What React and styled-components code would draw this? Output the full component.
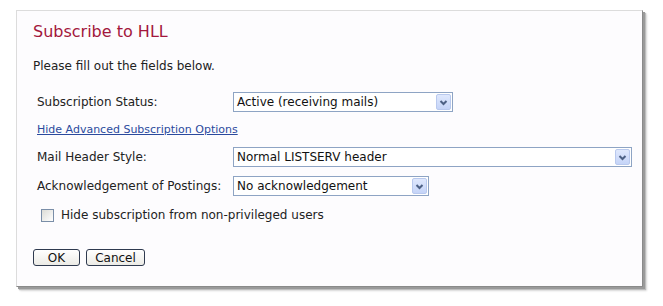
import React from "react";
import styled, { createGlobalStyle } from "styled-components";

const Global = createGlobalStyle`
  html, body { margin: 0; padding: 0; background: #ffffff; }
  body { font-family: "DejaVu Sans", Verdana, sans-serif; }
`;

const Page = styled.div`
  width: 663px;
  height: 306px;
  padding: 10px 0 0 16px;
  box-sizing: border-box;
`;

const Panel = styled.div`
  width: 627px;
  height: 277px;
  box-sizing: border-box;
  background: #fdfcfe;
  border-top: 1px solid #dcdcdc;
  border-left: 1px solid #dcdcdc;
  border-right: 1px solid #8a8a8a;
  border-bottom: 1px solid #8a8a8a;
  box-shadow: 2px 2px 0 #9a9a9a, 3px 3px 1px #bdbdbd, 4px 4px 2px #dedede;
  padding: 12px 0 0 16px;
  display: flex;
  flex-direction: column;
`;

const Title = styled.h1`
  margin: 0;
  font-size: 16px;
  font-weight: normal;
  color: #a3173c;
  line-height: 18px;
`;

const Intro = styled.p`
  margin: 18px 0 0 0;
  font-size: 12px;
  color: #222;
  line-height: 14px;
`;

const Form = styled.div`
  margin: 19px 0 0 4px;
  display: grid;
  grid-template-columns: 196px auto;
  align-items: center;
  row-gap: 9px;
  font-size: 12px;
  color: #222;
`;

const Label = styled.div`
  line-height: 14px;
`;

const LinkRow = styled.a`
  grid-column: 1 / span 2;
  font-size: 11px;
  color: #2b4a9d;
  text-decoration: underline;
  line-height: 13px;
  padding: 2px 0;
`;

const Select = styled.div`
  width: ${(p) => p.$w}px;
  height: 20px;
  box-sizing: border-box;
  border: 1px solid #8ea4c4;
  background: #fff;
  display: flex;
  align-items: center;
  justify-content: space-between;
  padding: 0 1px 0 3px;
  font-size: 12px;
  color: #111;
`;

const Arrow = styled.span`
  width: 15px;
  height: 16px;
  box-sizing: border-box;
  border: 1px solid #b9c9ee;
  border-radius: 2px;
  background: linear-gradient(#dfe8fd, #c5d4f8);
  display: flex;
  align-items: center;
  justify-content: center;
`;

const CheckRow = styled.label`
  display: flex;
  align-items: center;
  gap: 7px;
  margin: 12px 0 0 8px;
  font-size: 12px;
  color: #222;
`;

const Box = styled.span`
  width: 11px;
  height: 11px;
  border: 1px solid #7a8ea8;
  background: linear-gradient(135deg, #dcdcd6, #ffffff);
`;

const Buttons = styled.div`
  display: flex;
  gap: 6px;
  margin-top: 27px;
`;

const Button = styled.button`
  height: 17px;
  width: ${(p) => p.$w}px;
  box-sizing: border-box;
  padding: 0;
  font-family: "DejaVu Sans", Verdana, sans-serif;
  font-size: 12px;
  color: #111;
  background: linear-gradient(#ffffff, #ecebe6);
  border: 1px solid #2f3a4f;
  border-radius: 3px;
  line-height: 14px;
`;

const Chevron = () => (
  <svg width="9" height="7" viewBox="0 0 9 7">
    <path d="M1.5 2 L4.5 5 L7.5 2" fill="none" stroke="#4d6185" strokeWidth="2" />
  </svg>
);

const Dropdown = ({ w, children }) => (
  <Select $w={w}>
    <span>{children}</span>
    <Arrow>
      <Chevron />
    </Arrow>
  </Select>
);

export default function App() {
  return (
    <>
      <Global />
      <Page>
        <Panel>
          <Title>Subscribe to HLL</Title>
          <Intro>Please fill out the fields below.</Intro>
          <Form>
            <Label>Subscription Status:</Label>
            <Dropdown w={220}>Active (receiving mails)</Dropdown>
            <LinkRow href="#">Hide Advanced Subscription Options</LinkRow>
            <Label>Mail Header Style:</Label>
            <Dropdown w={399}>Normal LISTSERV header</Dropdown>
            <Label>Acknowledgement of Postings:</Label>
            <Dropdown w={196}>No acknowledgement</Dropdown>
          </Form>
          <CheckRow>
            <Box />
            Hide subscription from non-privileged users
          </CheckRow>
          <Buttons>
            <Button $w={47}>OK</Button>
            <Button $w={59}>Cancel</Button>
          </Buttons>
        </Panel>
      </Page>
    </>
  );
}
